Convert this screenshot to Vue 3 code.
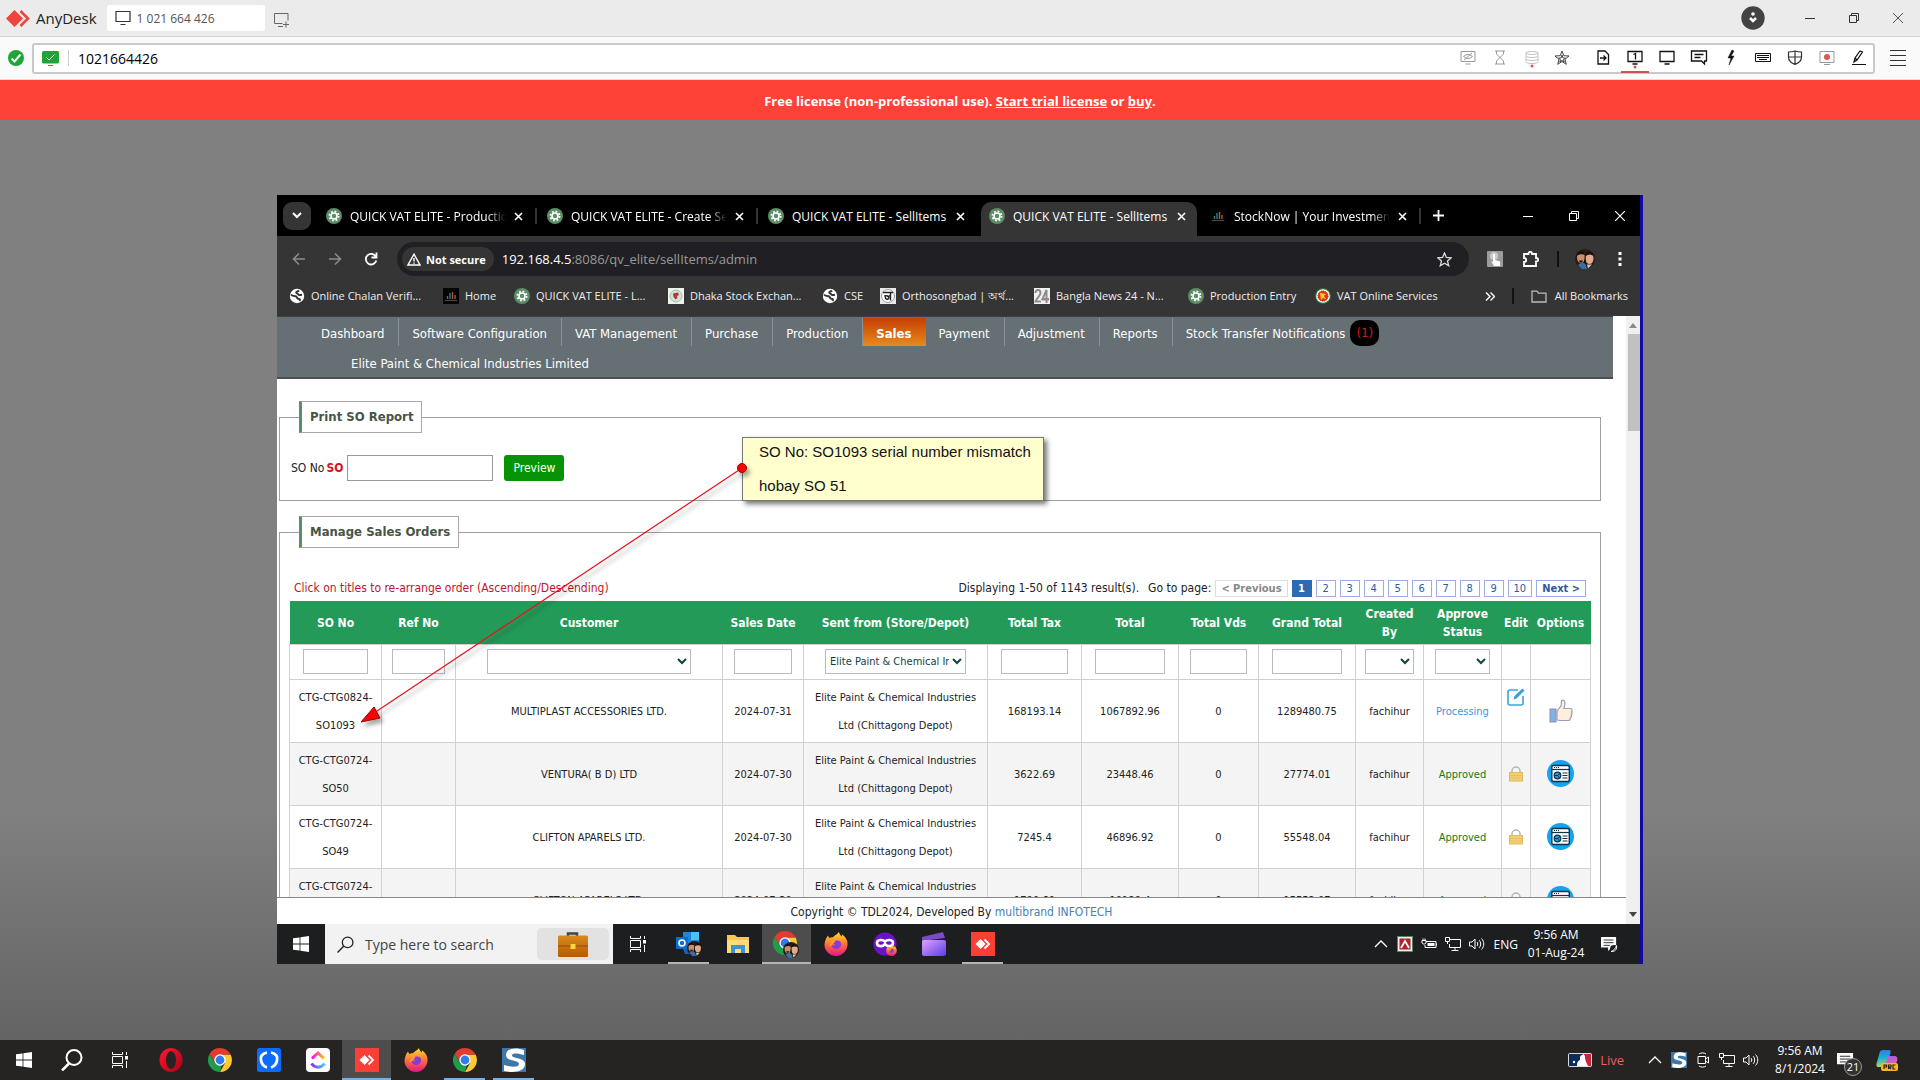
<template>
  <div class="desktop">
    <!-- Shared icon shapes -->
    <svg class="sprite" aria-hidden="true">
      <defs>
        <linearGradient id="gFox" x1="0" y1="0" x2="0" y2="1">
          <stop offset="0" stop-color="#ffe226" /><stop offset=".5" stop-color="#ff7139" /><stop offset="1" stop-color="#e31587" />
        </linearGradient>
        <linearGradient id="gOpera" x1="0" y1="0" x2="1" y2="1">
          <stop offset="0" stop-color="#ff1b2d" /><stop offset="1" stop-color="#a70014" />
        </linearGradient>
        <linearGradient id="gClip" x1="0" y1="0" x2="1" y2="1">
          <stop offset="0" stop-color="#e0a3fa" /><stop offset="1" stop-color="#5a3be8" />
        </linearGradient>
        <linearGradient id="gCase" x1="0" y1="0" x2="0" y2="1">
          <stop offset="0" stop-color="#d98a1a" /><stop offset="1" stop-color="#b35c06" />
        </linearGradient>
        <linearGradient id="gUp" x1="0" y1="0" x2="1" y2="0">
          <stop offset="0" stop-color="#ff02f0" /><stop offset="1" stop-color="#ffc800" />
        </linearGradient>
        <linearGradient id="gDown" x1="0" y1="0" x2="1" y2="0">
          <stop offset="0" stop-color="#8930fd" /><stop offset="1" stop-color="#49ccf9" />
        </linearGradient>
        <linearGradient id="gCopA" x1="0" y1="0" x2="0" y2="1">
          <stop offset="0" stop-color="#2a7cf0" /><stop offset=".5" stop-color="#1fb6c9" /><stop offset="1" stop-color="#b6d84a" />
        </linearGradient>
        <linearGradient id="gCopB" x1="0" y1="0" x2="0" y2="1">
          <stop offset="0" stop-color="#a65cf0" /><stop offset="1" stop-color="#f0609a" />
        </linearGradient>
      </defs>
      <symbol id="gear" viewBox="0 0 16 16">
        <circle cx="8" cy="8" r="8" fill="#5c8d66" />
        <circle cx="8" cy="8" r="4.6" fill="none" stroke="#fff" stroke-width="1.8" stroke-dasharray="1.8 1.81" />
        <circle cx="8" cy="8" r="3" fill="none" stroke="#fff" stroke-width="1.6" />
      </symbol>
      <symbol id="globe" viewBox="0 0 16 16">
        <circle cx="8" cy="8" r="7.2" fill="#fff" />
        <path d="M2 6.500c1.500 2 3.500 1 5 1.800s.5 2.200 2.500 2.500 1.500 1.200 1 2.200M10 2.500c-1 1.200-2.500.6-2.800 1.800-.2 1 1.600.9 2 2 .4 1 2 .8 3.800.4" fill="none" stroke="#353535" stroke-width="2" />
      </symbol>
      <symbol id="stock" viewBox="0 0 16 16">
        <rect width="16" height="16" fill="#050505" />
        <path d="M4.500 11V8M7 11V5" stroke="#2f7f8a" stroke-width="1.400" />
        <path d="M9.500 11V4M12 11V7" stroke="#b5543c" stroke-width="1.400" />
        <path d="M2 12.500h12" stroke="#5c4640" />
      </symbol>
      <symbol id="seal" viewBox="0 0 16 16">
        <rect width="16" height="16" fill="#eef3ee" /><circle cx="8" cy="8" r="6" fill="#d3e2d6" stroke="#a5bcae" />
        <path d="M5 5.500l5-1 1 2.500-2 1 .5 2-2 1.500-2-2.500z" fill="#b03a3a" />
      </symbol>
      <symbol id="ortho" viewBox="0 0 16 16">
        <rect width="16" height="16" fill="#e9e9e9" /><circle cx="8" cy="8" r="6.500" fill="#fff" stroke="#999" />
        <path d="M3 4.500h10M10.500 4.500v8M5 7c0 3 1 5 3 4s0-4-3-3M8 9l2.500-2" fill="none" stroke="#222" stroke-width="1.400" />
      </symbol>
      <symbol id="news" viewBox="0 0 16 16">
        <rect width="16" height="16" fill="#f2f2f2" />
        <path d="M1.500 5c0-4 5-4 5 0 0 3-4 5-5 8.500h5.500M12.500 15V2L8.500 11H15" fill="none" stroke="#8d8d8d" stroke-width="2" />
        <path d="M8 12h7" stroke="#c77" />
      </symbol>
      <symbol id="vat" viewBox="0 0 16 16">
        <circle cx="8" cy="8" r="7.800" fill="#2f8a3e" /><circle cx="8" cy="8" r="6.800" fill="#fff" />
        <circle cx="8" cy="8" r="5.200" fill="#e0331b" stroke="#c22" stroke-dasharray="1 1" />
        <path d="M5 5l6 1-2 2 2 3-3-1-2 2z" fill="#ffc62b" />
      </symbol>
      <symbol id="chrome" viewBox="0 0 24 24">
        <path d="M12 6.500h10.600A12 12 0 0 1 12 24l5-9z" fill="#fcc934" />
        <path d="M1.600 6A12 12 0 0 1 22.600 6.500H12L7 14.500z" fill="#e33b2e" />
        <path d="M1.600 6l5.600 9.500 7 .5L12 24A12 12 0 0 1 1.600 6z" fill="#1e9e4a" />
        <circle cx="12" cy="12" r="5.700" fill="#fff" /><circle cx="12" cy="12" r="4.400" fill="#2f7cf0" />
      </symbol>
      <symbol id="firefox" viewBox="0 0 24 24">
        <path d="M4 3.500c.3 1.200.8 2 1.500 2.500C7 5 8 5 9 5.300 10 3.500 13 3 15 0c.5 2 1 3 3 4.500.2-.8 0-1.500-.3-2.300C22 5 24 9 23.500 13 23 19 18 24 12 24S.5 19 .5 13C.5 10 2 5.500 4 3.500z" fill="url(#gFox)" />
        <path d="M9 9c2 .5 4-1.500 6.500 0 2.500 1.600 2 6-1 7.500s-7 0-7-3.500c1 .8 2.500.5 3.500-.5-1.500-.5-2-2-2-3.500z" fill="#8a3bd6" />
        <path d="M4 6c1 3 4 2 6 3.500-1 1.500-3 1.500-4 4.500" fill="none" stroke="#ff9a2e" stroke-width="2" />
      </symbol>
      <symbol id="anydesk" viewBox="0 0 24 24">
        <rect width="24" height="24" fill="#fb3e36" />
        <path d="M9.500 7l5 5-5 5-5-5z" fill="#fff" /><path d="M13.500 7.500L18 12l-4.500 4.500" fill="none" stroke="#fff" stroke-width="1.800" />
      </symbol>
      <symbol id="windows" viewBox="0 0 16 16">
        <path d="M0 2.300L6.600 1.400v6.200H0zM7.400 1.300L16 0v7.600H7.400zM0 8.400h6.600v6.200L0 13.700zM7.400 8.400H16V16l-8.600-1.300z" fill="#fff" />
      </symbol>
      <symbol id="taskview" viewBox="0 0 16 16">
        <path d="M.5 0v2.500h10V0M.5 16v-2.500h10V16M.5 4.500h10v7H.5z" fill="none" stroke="#fff" />
        <path d="M14.500 0v3M14.500 9v7" stroke="#fff" /><rect x="13" y="4" width="3" height="3.500" fill="#fff" />
      </symbol>
      <symbol id="lens" viewBox="0 0 16 16">
        <circle cx="10" cy="6" r="5" fill="none" stroke="currentColor" stroke-width="1.200" /><path d="M6.500 9.500L.5 15.500" stroke="currentColor" stroke-width="1.300" />
      </symbol>
      <symbol id="chevup" viewBox="0 0 16 16"><path d="M2 11l6-6 6 6" fill="none" stroke="#fff" stroke-width="1.300" /></symbol>
      <symbol id="network" viewBox="0 0 16 16">
        <path d="M5 3.500h10.500v8H4.500V8M10 11.500v3M6.500 14.500h7M.5 1.500h4v4h-4zM2.500 5.500v2.500" fill="none" stroke="#fff" />
      </symbol>
      <symbol id="speaker" viewBox="0 0 16 16">
        <path d="M.5 6v4h2.500l3 3V3L3 6zM8 6c1 1 1 3 0 4M10.200 4.200c2 2 2 5.600 0 7.600M12.500 2.500c3 3 3 8 0 11" fill="none" stroke="#fff" />
      </symbol>
      <symbol id="note" viewBox="0 0 18 18">
        <path d="M0 1h17v12h-5l-4 4v-4H0z" fill="#fff" /><path d="M3 4.500h11M3 7.500h11M3 10.500h7" stroke="#222" />
      </symbol>
      <symbol id="sicon" viewBox="0 0 24 24">
        <rect width="24" height="24" fill="#3f78a8" />
        <path d="M22 2c-8-3-18-2-18 5 0 7 13 4 13 9 0 4-9 3-15 1v6c9 2 21 1 21-7C23 9 10 11 10 7.500c0-3 7-2 12-.5z" fill="#fff" />
      </symbol>
      <symbol id="faces" viewBox="0 0 20 20">
        <circle cx="10" cy="10" r="10" fill="#2a1a12" />
        <ellipse cx="6" cy="8.500" rx="4" ry="5.500" fill="#c98e6c" /><ellipse cx="14.500" cy="9.500" rx="4" ry="5.500" fill="#e0ab8c" />
        <path d="M1.500 7C2 1 9 1 10 6 7 4.500 4 5 1.500 7zM10.500 7c1-6 7-5 8.500 0-3-2-5.500-2-8.500 0z" fill="#17100d" />
        <path d="M4 11.500h4l-1 2H5zM10 5l1 10-2-1z" fill="#17100d" />
        <path d="M3 16c3-3 6-3 8 0l1 4H7z" fill="#3a6ea5" /><path d="M12 15.500h5l-4 4z" fill="#cfc6c0" />
      </symbol>
      <symbol id="lock" viewBox="0 0 14 16">
        <path d="M3 7V5a4 4 0 0 1 8 0v2" fill="none" stroke="#b5b5b5" stroke-width="1.500" />
        <rect x=".5" y="6.500" width="13" height="8.500" fill="#f3cf74" stroke="#e0b95c" /><path d="M1 9.500h12M1 12h12" stroke="#e8bf5e" />
      </symbol>
      <symbol id="report" viewBox="0 0 27 27">
        <circle cx="13.500" cy="13.500" r="13.500" fill="#14a3ee" />
        <rect x="4.800" y="5.500" width="17.500" height="16" rx="1.500" fill="#fff" stroke="#123047" stroke-width="1.400" />
        <path d="M5 9.500h17" stroke="#123047" stroke-width="1.200" /><path d="M7 7.500h5" stroke="#123047" stroke-dasharray="1 1" />
        <circle cx="10.500" cy="15.500" r="3.300" fill="#14a3ee" stroke="#123047" stroke-width="1.200" /><path d="M10.500 15.500l3-2M10.500 15.500l2 2.500M10.500 15.500h-3" stroke="#123047" />
        <path d="M15.500 13h5M15.500 15.500h5M15.500 18h5" stroke="#123047" />
      </symbol>
      <symbol id="monitor" viewBox="0 0 16 16"><path d="M1 1.500h14v10H1zM5.500 14.500h5" fill="none" stroke="currentColor" stroke-width="1.200" /></symbol>
    </svg>

    <!-- AnyDesk title bar -->
    <header class="ad-title">
      <svg width="24" height="17" viewBox="0 0 24 17"><path d="M8.500 0L17 8.500 8.500 17 0 8.500z" fill="#ef443b" /><path d="M14.500 1l7.500 7.500-7.500 7.500" fill="none" stroke="#ef443b" stroke-width="2.600" /></svg>
      <span class="ad-brand">AnyDesk</span>
      <button class="ad-tab"><svg width="16" height="16"><use href="#monitor" /></svg>1 021 664 426</button>
      <button class="bare ad-new" aria-label="New tab">
        <svg width="17" height="16" viewBox="0 0 17 16"><path d="M9.500 11.500H1.500v-10h13.500v7M5 14.500h5M13 9.500v6M10 12.500h6" fill="none" stroke="#666" /></svg>
      </button>
      <div class="ad-controls">
        <button class="bare ad-dot" aria-label="Status"><svg width="24" height="24" viewBox="0 0 24 24"><circle cx="12" cy="12" r="11.700" fill="#434343" /><circle cx="12" cy="8" r="1.800" fill="#fff" /><path d="M9 12l3 3 3-3" fill="none" stroke="#fff" stroke-width="2.500" /></svg></button>
        <button class="bare" aria-label="Minimize"><svg width="12" height="12"><path d="M1 6.500h10" stroke="#333" /></svg></button>
        <button class="bare" aria-label="Restore"><svg width="12" height="12" viewBox="0 0 12 12"><path d="M1.500 3.500h7v7h-7zM3.500 3.500v-2h7v7h-2" fill="none" stroke="#333" /></svg></button>
        <button class="bare" aria-label="Close"><svg width="12" height="12"><path d="M1 1l10 10M11 1L1 11" stroke="#555" /></svg></button>
      </div>
    </header>

    <!-- AnyDesk address row -->
    <div class="ad-bar">
      <svg width="16" height="16" viewBox="0 0 16 16"><circle cx="8" cy="8" r="8" fill="#1fa535" /><path d="M3.500 8.500l3 3 6-7" fill="none" stroke="#fff" stroke-width="2" /></svg>
      <div class="ad-address">
        <svg width="17" height="15" viewBox="0 0 17 15"><rect width="17" height="12.500" rx="1.500" fill="#1fa535" /><path d="M4.500 6.500l2.500 2.500 5.500-5.500" fill="none" stroke="#fff" /><path d="M6 14.500h5" stroke="#1fa535" /></svg>
        <i class="ad-line"></i>
        <input class="ad-input" aria-label="Remote address" value="1021664426" />
        <button v-for="t in tools" :key="t.name" class="bare ad-tool" :class="t.cls" :aria-label="t.name">
          <svg width="16" height="16" viewBox="0 0 16 16" overflow="visible">
            <path :d="t.d" :fill="t.fill || 'none'" stroke="currentColor" :stroke-width="t.w || 1" />
            <circle v-if="t.dot" cx="8" :cy="t.dot" :r="t.r || 1.5" fill="#e05550" />
          </svg>
        </button>
      </div>
      <button class="bare ad-menu" aria-label="Menu"><svg width="16" height="18"><path d="M0 1.500h16M0 6.500h16M0 11.500h16M0 16.500h16" stroke="#333" /></svg></button>
    </div>

    <div class="ad-banner">Free license (non-professional use). <a href="#">Start trial license</a> or <a href="#">buy</a>.</div>

    <main class="stage">
      <div class="remote">
        <!-- Chrome tab strip -->
        <div class="tabs">
          <button class="tab-search" aria-label="Search tabs"><svg width="10" height="7"><path d="M1 1l4 4 4-4" fill="none" stroke="#fff" stroke-width="2" /></svg></button>
          <div v-for="(tab, i) in tabs" :key="i" class="tab" :class="{ active: tab.active, line: tab.line }">
            <svg width="16" height="16"><use :href="'#' + tab.icon" /></svg>
            <span class="tab-text" :class="{ fade: tab.fade }">{{ tab.title }}</span>
            <button class="bare" aria-label="Close tab"><svg width="9" height="9"><path d="M1 1l7 7M8 1L1 8" stroke="#fff" stroke-width="1.600" /></svg></button>
          </div>
          <button class="bare tab-plus" aria-label="New tab"><svg width="11" height="11"><path d="M5.500 0v11M0 5.500h11" stroke="#fff" stroke-width="1.800" /></svg></button>
          <div class="win-controls">
            <button class="bare" aria-label="Minimize"><svg width="10" height="10"><path d="M0 5.500h10" stroke="#fff" /></svg></button>
            <button class="bare" aria-label="Restore"><svg width="10" height="10"><path d="M.5 2.500h7v7h-7zM2.500 2.500v-2h7v7h-2" fill="none" stroke="#fff" /></svg></button>
            <button class="bare" aria-label="Close"><svg width="10" height="10"><path d="M0 0l10 10M10 0L0 10" stroke="#fff" stroke-width="1.200" /></svg></button>
          </div>
        </div>

        <!-- Chrome toolbar -->
        <div class="toolbar">
          <button class="bare" aria-label="Back"><svg width="14" height="14"><path d="M13 7H2M7 1.500L1.500 7 7 12.500" fill="none" stroke="#8a8a8a" stroke-width="1.600" /></svg></button>
          <button class="bare" aria-label="Forward"><svg width="14" height="14"><path d="M1 7h11M7 1.500L12.500 7 7 12.500" fill="none" stroke="#8a8a8a" stroke-width="1.600" /></svg></button>
          <button class="bare" aria-label="Reload"><svg width="14" height="14"><path d="M12 5A5.300 5.300 0 1 0 12.300 8.500M12.500 .5v5h-5" fill="none" stroke="#fff" stroke-width="1.800" /></svg></button>
          <div class="omnibox">
            <span class="chip"><svg width="14" height="13" viewBox="0 0 14 13"><path d="M7 1.200L13 12H1zM7 5v3.500M7 9.500v1.300" fill="none" stroke="#fff" stroke-width="1.400" /></svg>Not secure</span>
            <span class="url"><b>192.168.4.5</b>:8086/qv_elite/sellItems/admin</span>
            <svg width="15" height="15" viewBox="0 0 15 15"><path d="M7.500 1l1.900 4.500 4.800.4-3.700 3.100 1.200 4.700-4.200-2.500-4.200 2.500 1.200-4.700L.8 5.900l4.800-.4z" fill="none" stroke="#ddd" stroke-width="1.300" /></svg>
          </div>
          <svg width="16" height="16" viewBox="0 0 16 16"><rect width="16" height="16" rx="1" fill="#9c9c9c" /><circle cx="7" cy="5" r="4" fill="#c9c9c9" /><path d="M6 3h2v6l5 1.500V15H7l-3-5 2 1z" fill="#fff" /></svg>
          <svg class="puzzle" width="16" height="16" viewBox="0 0 16 16"><path d="M1 3h4.500c0-3 3.500-3 3.500 0H13v4c3 0 3 3.500 0 3.500V15H1v-4c3 0 3-4 0-4z" fill="none" stroke="#fff" stroke-width="1.800" /></svg>
          <i class="vline"></i>
          <svg class="avatar" width="20" height="20"><use href="#faces" /></svg>
          <button class="bare dots" aria-label="Chrome menu"><svg width="4" height="16"><path d="M2 1v3M2 6.500v3M2 12v3" stroke="#fff" stroke-width="3" /></svg></button>
        </div>

        <nav class="bookmarks">
          <a v-for="b in bookmarks" :key="b.label" href="#"><svg width="16" height="16"><use :href="'#' + b.icon" /></svg>{{ b.label }}</a>
          <div class="bm-end">
            <svg width="10" height="9"><path d="M1 .5l4 4-4 4M5.500 .5l4 4-4 4" fill="none" stroke="#fff" stroke-width="1.400" /></svg>
            <i class="vline"></i>
            <a href="#"><svg width="16" height="13" viewBox="0 0 16 13"><path d="M1 1.200h5l1.500 2H15V12H1z" fill="none" stroke="#bbb" stroke-width="1.300" /></svg>All Bookmarks</a>
          </div>
        </nav>

        <!-- Web page -->
        <div class="viewport">
          <div class="page">
            <div class="scroll">
              <nav class="menu">
                <div class="menu-row">
                  <a v-for="m in menu" :key="m" href="#" :class="{ current: m === 'Sales' }">{{ m }}<span v-if="m.startsWith('Stock')" class="count">(1)</span></a>
                </div>
                <div class="company">Elite Paint &amp; Chemical Industries Limited</div>
              </nav>

              <fieldset class="box">
                <legend>Print SO Report</legend>
                <form class="so-form" @submit.prevent>
                  <label for="so">SO No</label><b>SO</b>
                  <input id="so" type="text" />
                  <button>Preview</button>
                </form>
              </fieldset>

              <fieldset class="box orders">
                <legend>Manage Sales Orders</legend>
                <div class="summary">
                  <span class="hint">Click on titles to re-arrange order (Ascending/Descending)</span>
                  <span class="shown">Displaying 1-50 of 1143 result(s).</span>
                  <span class="goto">Go to page:</span>
                  <div class="pager">
                    <a href="#" class="prev">&lt; Previous</a>
                    <a v-for="n in 10" :key="n" href="#" :class="{ on: n === 1 }">{{ n }}</a>
                    <a href="#" class="next">Next &gt;</a>
                  </div>
                </div>
                <table>
                  <colgroup>
                    <col v-for="c in columns" :key="c.title" :style="{ width: c.width ? c.width + 'px' : 'auto' }" />
                  </colgroup>
                  <thead>
                    <tr><th v-for="c in columns" :key="c.title" :class="{ narrow: c.filter === 'select' }">{{ c.title }}</th></tr>
                    <tr class="filters">
                      <td v-for="c in columns" :key="c.title">
                        <input v-if="c.filter === 'text'" type="text" :aria-label="c.title" />
                        <select v-else-if="c.filter" :aria-label="c.title" :class="{ wide: c.filter === 'wide' }"><option>{{ c.option }}</option></select>
                      </td>
                    </tr>
                  </thead>
                  <tbody>
                    <tr v-for="r in rows" :key="r.so">
                      <td>CTG-{{ r.prefix }}-<br />{{ r.so }}</td>
                      <td></td>
                      <td>{{ r.customer }}</td>
                      <td>{{ r.date }}</td>
                      <td>Elite Paint &amp; Chemical Industries<br />Ltd (Chittagong Depot)</td>
                      <td>{{ r.tax }}</td>
                      <td>{{ r.total }}</td>
                      <td>0</td>
                      <td>{{ r.grand }}</td>
                      <td>fachihur</td>
                      <td :class="r.status.toLowerCase()">{{ r.status }}</td>
                      <td class="icon" :class="{ edit: r.status === 'Processing' }">
                        <svg v-if="r.status === 'Processing'" width="18" height="18" viewBox="0 0 18 18"><path d="M11 2H3Q1 2 1 4v11q0 2 2 2h11q2 0 2-2V8" fill="none" stroke="#3aa6dd" stroke-width="1.600" /><path d="M6.500 11.500l1-3.500L15.500.5l2 2-8 8z" fill="#3a9fd6" /></svg>
                        <svg v-else width="14" height="16"><use href="#lock" /></svg>
                      </td>
                      <td class="icon">
                        <svg v-if="r.status === 'Processing'" width="24" height="24" viewBox="0 0 24 24"><rect x="1" y="10" width="6" height="13" fill="#7eb2ea" stroke="#8b8fb5" /><path d="M8 21V12l4-5 .5-5.500c2-1 3.500.5 3.500 3L15 9.500h6.500c2 0 2 2.500 1 3.500 1 1 .8 2.500-.3 3 .6 1.500 0 2.500-1 3 .2 1.500-.5 2.500-2 2.500h-8z" fill="#fdeedd" stroke="#a79ab8" stroke-width="1.200" /></svg>
                        <svg v-else width="27" height="27"><use href="#report" /></svg>
                      </td>
                    </tr>
                  </tbody>
                </table>
              </fieldset>
            </div>
            <footer>Copyright © TDL2024, Developed By <a href="#">multibrand INFOTECH</a></footer>
          </div>
          <div class="scrollbar">
            <svg width="8" height="5"><path d="M0 5l4-5 4 5z" fill="#8a8a8a" /></svg>
            <i class="thumb"></i>
            <svg width="8" height="5"><path d="M0 0l4 5 4-5z" fill="#444" /></svg>
          </div>

          <!-- Annotation drawn over the page -->
          <div class="callout"><p>SO No: SO1093 serial number mismatch</p><p>hobay SO 51</p></div>
          <svg class="arrow" width="400" height="270" viewBox="0 0 400 270">
            <g class="arrow-shape">
              <path d="M386 6L18 251" stroke="#e8101c" stroke-width="1.200" />
              <path d="M5 260l13-15 6 11z" fill="#f00" stroke="#900" />
              <circle cx="386" cy="6" r="4.500" fill="#f00" stroke="#900" />
            </g>
          </svg>
        </div>

        <!-- Remote taskbar -->
        <div class="taskbar inner">
          <button class="task start" aria-label="Start"><svg width="16" height="16"><use href="#windows" /></svg></button>
          <label class="search">
            <svg width="17" height="17"><use href="#lens" /></svg>
            <input type="text" placeholder="Type here to search" aria-label="Search" />
            <span class="case"><svg width="30" height="25" viewBox="0 0 30 25"><path d="M10 4V1.500h9V4" fill="none" stroke="#444" stroke-width="2.500" /><rect y="3.500" width="30" height="21.500" rx="1.500" fill="url(#gCase)" /><path d="M0 14h30" stroke="#8f4b04" /><rect x="12.500" y="12" width="5" height="5" fill="#ffd43a" /></svg></span>
          </label>
          <button class="task" aria-label="Task view"><svg width="16" height="16"><use href="#taskview" /></svg></button>
          <button class="task run first" aria-label="Outlook"><svg width="26" height="26" viewBox="0 0 26 26"><rect x="7" y="1" width="16" height="16" fill="#1d86d8" /><rect x="15" y="1" width="8" height="8" fill="#4cc1f5" /><path d="M5 12h18v11H9z" fill="#1663b8" /><rect x="0" y="6" width="12" height="12" fill="#0f6cc9" /><circle cx="6" cy="12" r="3" fill="none" stroke="#fff" stroke-width="1.600" /><svg x="11" y="10" width="15" height="15"><use href="#faces" /></svg></svg></button>
          <button class="task" aria-label="Explorer"><svg width="22" height="20" viewBox="0 0 22 20"><path d="M0 1h8l2 2h12v16H0z" fill="#f8c94b" /><path d="M0 6h22v13H0z" fill="#ffdc75" /><path d="M4 19v-8h14v8h-4v-4H8v4z" fill="#3b93d9" /></svg></button>
          <button class="task active run" aria-label="Chrome"><svg width="27" height="27" viewBox="0 0 27 27"><svg width="24" height="24"><use href="#chrome" /></svg><svg x="10" y="11" width="16" height="16"><use href="#faces" /></svg></svg></button>
          <button class="task" aria-label="Firefox"><svg width="24" height="24"><use href="#firefox" /></svg></button>
          <button class="task" aria-label="Firefox private"><svg width="24" height="24" viewBox="0 0 24 24"><circle cx="12" cy="12" r="11.500" fill="#6d12c9" /><path d="M12 9.500c-2-2-8-2.500-8 1.500s6 4 8 1c2 3 8 3 8-1s-6-3.500-8-1.500z" fill="none" stroke="#fff" stroke-width="2.600" /><svg x="13" y="13" width="11" height="11"><use href="#firefox" /></svg></svg></button>
          <button class="task" aria-label="Clipchamp"><svg width="24" height="24" viewBox="0 0 24 24"><path d="M0 5L21 0l2 6L0 9z" fill="#7a4bc2" /><rect y="8" width="24" height="16" rx="2" fill="url(#gClip)" /></svg></button>
          <button class="task run" aria-label="AnyDesk"><svg width="24" height="24"><use href="#anydesk" /></svg></button>
          <div class="tray">
            <svg width="16" height="16"><use href="#chevup" /></svg>
            <svg width="16" height="16" viewBox="0 0 16 16"><rect width="16" height="16" fill="#4d8a63" /><rect x="1" y="1" width="14" height="14" fill="#eee" /><rect x="2.500" y="2.500" width="11" height="11" fill="#b3202b" /><path d="M4 12l4-7 4 7" fill="none" stroke="#fff" stroke-width="1.800" /></svg>
            <svg width="16" height="16" viewBox="0 0 16 16"><path d="M5 5.500h10v6H4V9M1 4.500h4v2.500l-1.500 1H2.500L1 7zM2 2.500v2M4 2.500v2M15.500 7.500v2" fill="none" stroke="#fff" /><path d="M6.500 8.500h7" stroke="#fff" stroke-width="3" /></svg>
            <svg width="16" height="16"><use href="#network" /></svg>
            <svg width="16" height="16"><use href="#speaker" /></svg>
            <span class="lang">ENG</span>
            <div class="clock"><span>9:56 AM</span><span>01-Aug-24</span></div>
            <svg class="bell" width="17" height="17" viewBox="0 0 17 17"><svg width="16" height="16"><use href="#note" /></svg><circle cx="13" cy="13" r="4" fill="#1d1e1f" /><path d="M15.500 9.500c1 4-2 6.500-5.500 6 3-1 4.500-3 5.500-6z" fill="none" stroke="#fff" /></svg>
          </div>
        </div>
      </div>
    </main>

    <!-- Local taskbar -->
    <div class="taskbar outer">
      <button class="task start" aria-label="Start"><svg width="16" height="16"><use href="#windows" /></svg></button>
      <button class="task start" aria-label="Search"><svg width="22" height="22" viewBox="0 0 22 22"><circle cx="13" cy="8.500" r="7.500" fill="none" stroke="#fff" stroke-width="2" /><path d="M8 14.500L1 21.500" stroke="#fff" stroke-width="2.500" /></svg></button>
      <button class="task start" aria-label="Task view"><svg width="16" height="16"><use href="#taskview" /></svg></button>
      <button class="task first" aria-label="Opera"><svg width="24" height="24" viewBox="0 0 24 24"><ellipse cx="12" cy="12" rx="11.500" ry="12" fill="url(#gOpera)" /><ellipse cx="12" cy="12" rx="5" ry="9" fill="#252423" /></svg></button>
      <button class="task" aria-label="Chrome"><svg width="24" height="24"><use href="#chrome" /></svg></button>
      <button class="task" aria-label="Brackets"><svg width="24" height="24" viewBox="0 0 24 24"><rect width="24" height="24" rx="2.500" fill="#0b6cff" /><path d="M10 4.500c-5 1-7 4-6 8 .7 3.500 3 6 6 7M14 4.500c5 1 7 4 6 8-.7 3.500-3 6-6 7" fill="none" stroke="#fff" stroke-width="2.800" /></svg></button>
      <button class="task" aria-label="ClickUp"><svg width="24" height="24" viewBox="0 0 24 24"><rect width="24" height="24" rx="4" fill="#fff" /><path d="M6 10.500l6-5.500 6 5.500" fill="none" stroke="url(#gUp)" stroke-width="3" /><path d="M5.500 15.500c3.500 5 9.500 5 13 0" fill="none" stroke="url(#gDown)" stroke-width="3" /></svg></button>
      <button class="task active run" aria-label="AnyDesk"><svg width="24" height="24"><use href="#anydesk" /></svg></button>
      <button class="task" aria-label="Firefox"><svg width="24" height="24"><use href="#firefox" /></svg></button>
      <button class="task run" aria-label="Chrome window"><svg width="24" height="24"><use href="#chrome" /></svg></button>
      <button class="task run" aria-label="Snagit"><svg width="24" height="24"><use href="#sicon" /></svg></button>
      <div class="tray">
        <svg width="24" height="14" viewBox="0 0 24 14"><rect width="24" height="14" rx="2" fill="#ddd" /><path d="M1 1h14l-3 12H1z" fill="#0c2c5c" /><path d="M16 1h7v12h-4z" fill="#c4243c" /><path d="M9 13c0-4 1-5 3-6V4c1-3 5-3 5 0v3l3 6z" fill="#fff" /><circle cx="6" cy="9" r="1.200" fill="#fff" /></svg>
        <span class="live">Live</span>
        <svg width="16" height="16"><use href="#chevup" /></svg>
        <svg width="16" height="16"><use href="#sicon" /></svg>
        <svg width="16" height="16" viewBox="0 0 16 16"><path d="M3 4.500h7.500v7H3zM10.500 7l3-2v6l-3-2M4 2c2-1.500 5-1.500 7 0M4 14c2 1.500 5 1.500 7 0" fill="none" stroke="#fff" /></svg>
        <svg width="16" height="16"><use href="#network" /></svg>
        <svg width="16" height="16"><use href="#speaker" /></svg>
        <div class="clock"><span>9:56 AM</span><span>8/1/2024</span></div>
        <div class="bell"><svg width="17" height="17"><use href="#note" /></svg><span class="badge">21</span></div>
        <svg class="copilot" width="22" height="22" viewBox="0 0 22 22"><path d="M7 1h6c2 0 2 2 1.500 3L11 14c-1 3-3 4-5 4H3c-3 0-3-2-2-5L3.500 4C4 2 5 1 7 1z" fill="url(#gCopA)" /><path d="M13 7h5c3 0 4 2 3 5l-1.500 4H9l2-6c.5-2 1-3 2-3z" fill="url(#gCopB)" /><rect x="5" y="14" width="17" height="8" rx="2" fill="#ffb81c" /><path d="M8 20v-4h2.500v2H8M12.500 20v-4H15v2h-2l2 2M19.500 16h-2.500v4h2.500" fill="none" stroke="#222" stroke-width="1.200" /></svg>
      </div>
    </div>
  </div>
</template>

<script setup>
// Iconos de la barra de AnyDesk
const tools = [
  { name: 'Privacy', cls: 'dim', d: 'M1 1.500h14v10H1zM5.500 14h5M3.500 6.500q4.500-4 9 0q-4.500 4-9 0M4 10l8-7' },
  { name: 'Timer', cls: 'dim', d: 'M3 1h10M3 14h10M4.500 1v3L8 7.500 4.500 11v3M11.500 1v3L8 7.500l3.500 3.500v3' },
  { name: 'Storage', cls: 'faint', d: 'M2 3c0-2 12-2 12 0v9c0 2-12 2-12 0zM2 3c0 2 12 2 12 0M2 6c0 2 12 2 12 0M2 9c0 2 12 2 12 0', dot: 16 },
  { name: 'Favorites', cls: 'star', d: 'M8 1l1.800 4.700 5.200.3-4 3.300 1.300 5L8 11.500l-4.300 2.800 1.300-5L1 6l5.200-.3zM8 5l1 3 2.500.2-2 1.400.7 2.400L8 10.500 5.800 12l.7-2.400-2-1.400L7 8z' },
  { name: 'File transfer', d: 'M3 1h7l3.500 3.500V14H3zM5 8h6M8.500 5.500L11 8l-2.500 2.500', w: 1.3 },
  { name: 'Monitor one', cls: 'picked', d: 'M1 1.500h14v10H1zM5.500 14h5M6.500 4.500L8.500 3.500v6', w: 1.3, dot: 17 },
  { name: 'Display', d: 'M1 1.500h14v10H1zM5.500 14h5', w: 1.3 },
  { name: 'Chat', d: 'M.5 1h15v10h-2v3l-3-3H.5zM3.500 4.500h9M3.500 7.500h6', w: 1.3 },
  { name: 'Actions', d: 'M9 0L5 8h3l-2 7 5-9H8l3-5z', fill: '#111', w: 0.5 },
  { name: 'Keyboard', d: 'M.5 3.500h15v8H.5zM2 5.500h12M2 7.500h12M4 9.500h8' },
  { name: 'Permissions', cls: 'soft', d: 'M1.500 2q3.500 0 6.500-1 3 1 6.500 1v5q0 5-6.500 7.500-6.500-2.500-6.500-7.500zM8 1v13M1.500 7h13', w: 1.2 },
  { name: 'Record', cls: 'dim', d: 'M1 1.500h14v11H1zM5 14.500h6', dot: 7, r: 3 },
  { name: 'Whiteboard', d: 'M1 14.500h14M3 12l1-4L9 1l2.500 1L6 10zM4 8l2 2', w: 1.2 },
]

// Pestañas del navegador
const tabs = [
  { title: 'QUICK VAT ELITE - Production', icon: 'gear', fade: true, line: true },
  { title: 'QUICK VAT ELITE - Create Sell', icon: 'gear', fade: true, line: true },
  { title: 'QUICK VAT ELITE - SellItems', icon: 'gear' },
  { title: 'QUICK VAT ELITE - SellItems', icon: 'gear', active: true },
  { title: 'StockNow | Your Investment', icon: 'stock', fade: true, line: true },
]

const bookmarks = [
  { label: 'Online Chalan Verifi...', icon: 'globe' },
  { label: 'Home', icon: 'stock' },
  { label: 'QUICK VAT ELITE - L...', icon: 'gear' },
  { label: 'Dhaka Stock Exchan...', icon: 'seal' },
  { label: 'CSE', icon: 'globe' },
  { label: 'Orthosongbad | অর্থ...', icon: 'ortho' },
  { label: 'Bangla News 24 - N...', icon: 'news' },
  { label: 'Production Entry', icon: 'gear' },
  { label: 'VAT Online Services', icon: 'vat' },
]

const menu = ['Dashboard', 'Software Configuration', 'VAT Management', 'Purchase', 'Production', 'Sales', 'Payment', 'Adjustment', 'Reports', 'Stock Transfer Notifications']

// Columnas de la tabla
const columns = [
  { title: 'SO No', width: 92, filter: 'text' },
  { title: 'Ref No', width: 74, filter: 'text' },
  { title: 'Customer', filter: 'wide' },
  { title: 'Sales Date', width: 81, filter: 'text' },
  { title: 'Sent from (Store/Depot)', width: 184, filter: 'wide', option: 'Elite Paint & Chemical Industries Ltd' },
  { title: 'Total Tax', width: 94, filter: 'text' },
  { title: 'Total', width: 97, filter: 'text' },
  { title: 'Total Vds', width: 80, filter: 'text' },
  { title: 'Grand Total', width: 97, filter: 'text' },
  { title: 'Created By', width: 68, filter: 'select' },
  { title: 'Approve Status', width: 78, filter: 'select' },
  { title: 'Edit', width: 29 },
  { title: 'Options', width: 60 },
]

const rows = [
  { prefix: 'CTG0824', so: 'SO1093', customer: 'MULTIPLAST ACCESSORIES LTD.', date: '2024-07-31', tax: '168193.14', total: '1067892.96', grand: '1289480.75', status: 'Processing' },
  { prefix: 'CTG0724', so: 'SO50', customer: 'VENTURA( B D) LTD', date: '2024-07-30', tax: '3622.69', total: '23448.46', grand: '27774.01', status: 'Approved' },
  { prefix: 'CTG0724', so: 'SO49', customer: 'CLIFTON APARELS LTD.', date: '2024-07-30', tax: '7245.4', total: '46896.92', grand: '55548.04', status: 'Approved' },
  { prefix: 'CTG0724', so: 'SO48', customer: 'CLIFTON APARELS LTD.', date: '2024-07-30', tax: '1799.69', total: '10129.4', grand: '15552.07', status: 'Approved' },
]
</script>

<style>
body {
  margin: 0;
}
</style>

<style scoped>
.desktop {
  display: flex;
  flex-direction: column;
  height: 100vh;
  overflow: hidden;
  font-family: "Open Sans", "Noto Sans", sans-serif;
  font-size: 12px;
  color: #222;
}
.desktop * {
  box-sizing: border-box;
}
.sprite {
  position: absolute;
  width: 0;
  height: 0;
}
svg {
  flex: none;
  display: block;
}
button,
input,
select {
  font: inherit;
  margin: 0;
}
.bare {
  display: flex;
  padding: 0;
  border: 0;
  background: none;
  color: inherit;
}

/* AnyDesk */
.ad-title {
  display: flex;
  align-items: center;
  height: 37px;
  padding-left: 6px;
  background: #ebebeb;
  border-bottom: 1px solid #d4d4d4;
}
.ad-brand {
  margin: 0 10px 0 6px;
  font-size: 15px;
  font-weight: 500;
}
.ad-tab {
  display: flex;
  align-items: center;
  gap: 6px;
  width: 158px;
  height: 26px;
  padding: 0 8px;
  border: 0;
  border-radius: 2px;
  background: #fff;
  color: #555;
}
.ad-tab svg {
  color: #333;
}
.ad-new {
  margin: 3px 0 0 8px;
}
.ad-controls {
  display: flex;
  align-items: center;
  gap: 32px;
  margin-left: auto;
  padding-right: 16px;
}
.ad-dot {
  margin-right: 7px;
}
.ad-bar {
  display: flex;
  align-items: center;
  height: 43px;
  padding: 0 14px 0 8px;
  background: #fafafa;
  border-bottom: 1px solid #ddd;
}
.ad-address {
  flex: 1;
  display: flex;
  align-items: center;
  gap: 16px;
  height: 31px;
  margin: 0 15px 0 8px;
  padding: 0 6px 0 8px;
  border: 2px solid #c9c9c9;
  border-radius: 3px;
  background: #fff;
}
.ad-line {
  width: 1px;
  height: 16px;
  margin: 0 -7px;
  background: #ccc;
}
.ad-input {
  flex: 1;
  min-width: 0;
  padding: 0;
  border: 0;
  outline: 0;
  font-size: 14px;
  color: #000;
}
.ad-tool {
  position: relative;
  color: #111;
}
.dim {
  color: #999;
}
.faint {
  color: #c2c2c2;
}
.star {
  margin: 0 9px 0 -2px;
  color: #444;
}
.soft {
  color: #333;
}
.picked::after {
  content: "";
  position: absolute;
  left: -6px;
  right: -6px;
  bottom: -7px;
  height: 2px;
  background: #c8554f;
}
.ad-banner {
  height: 40px;
  background: #fe4238;
  color: #fff;
  font-size: 13px;
  font-weight: 700;
  line-height: 42px;
  text-align: center;
}
.ad-banner a {
  color: #fff;
}

/* Remote screen */
.stage {
  flex: 1;
  display: flex;
  min-height: 0;
  padding: 75px 277px 76px;
  background: linear-gradient(#808080 75%, #646464);
}
.remote {
  flex: 1;
  display: flex;
  flex-direction: column;
  min-width: 0;
  border-right: 3px solid #1408a0;
  background: #353535;
}
.tabs {
  display: flex;
  align-items: center;
  gap: 5px;
  height: 41px;
  padding-left: 6px;
  background: #000;
  color: #fff;
}
.tab-search {
  display: grid;
  place-items: center;
  width: 28px;
  height: 28px;
  margin-right: 2px;
  padding: 0;
  border: 0;
  border-radius: 9px;
  background: #353535;
}
.tab {
  position: relative;
  display: flex;
  align-items: center;
  gap: 8px;
  width: 216px;
  height: 34px;
  margin-top: 7px;
  padding: 0 11px 6px 8px;
}
.tab.active {
  border-radius: 10px 10px 0 0;
  background: #353535;
}
.tab.line::after {
  content: "";
  position: absolute;
  top: 6px;
  right: -3px;
  width: 2px;
  height: 16px;
  background: #333;
}
.tab-text {
  flex: 1;
  overflow: hidden;
  white-space: nowrap;
}
.fade {
  mask-image: linear-gradient(90deg, #000 88%, transparent);
}
.tab-plus {
  margin-left: 10px;
}
.win-controls {
  display: flex;
  gap: 36px;
  margin-left: auto;
  padding-right: 15px;
}
.toolbar {
  display: flex;
  align-items: center;
  height: 46px;
  padding: 0 18px 0 15px;
}
.toolbar > .bare {
  margin-right: 22px;
}
.omnibox {
  flex: 1;
  display: flex;
  align-items: center;
  height: 34px;
  margin: 0 18px 0 -3px;
  padding: 0 17px 0 5px;
  border-radius: 17px;
  background: #202024;
}
.chip {
  display: flex;
  align-items: center;
  gap: 5px;
  height: 24px;
  padding: 0 8px 0 5px;
  border-radius: 12px;
  background: #353535;
  color: #fff;
  font-size: 11px;
  font-weight: 700;
}
.url {
  flex: 1;
  margin-left: 8px;
  color: #999;
  font-size: 13px;
}
.url b {
  color: #fff;
  font-weight: 400;
}
.puzzle {
  margin-left: 20px;
}
.vline {
  width: 2px;
  height: 16px;
  background: #111;
}
.toolbar .vline {
  margin: 0 16px 0 18px;
}
.toolbar .dots {
  margin: 0 0 0 23px;
}
.bookmarks {
  display: grid;
  grid-template-columns: 154px 71px 154px 154px 58px 154px 154px 127px auto 1fr;
  align-items: center;
  height: 34px;
  padding: 0 12px 6px;
}
.bookmarks a {
  display: flex;
  align-items: center;
  gap: 6px;
  color: #eee;
  text-decoration: none;
  white-space: nowrap;
  font-size: 11px;
  line-height: 16px;
}
.bm-end {
  display: flex;
  align-items: center;
  justify-content: flex-end;
  gap: 17px;
}
.bm-end a {
  gap: 8px;
}

/* Page inside the browser */
.viewport {
  position: relative;
  flex: 1;
  display: flex;
  min-height: 0;
  background: #fff;
  font-family: "DejaVu Sans Condensed", "Noto Sans", sans-serif;
  font-size: 12px;
}
.page {
  flex: 1;
  display: flex;
  flex-direction: column;
  min-width: 0;
}
.scroll {
  flex: 1;
  min-height: 0;
  overflow: hidden;
  padding-right: 13px;
}
.menu {
  height: 63px;
  padding-top: 1px;
  border-top: 1px solid #39424a;
  border-bottom: 2px solid #4a5054;
  background: #666f74;
  font-size: 13px;
}
.menu-row {
  display: flex;
  height: 29px;
  padding-left: 31px;
}
.menu a {
  display: flex;
  align-items: center;
  height: 28px;
  padding: 2px 14px 0 13px;
  border-right: 1px solid #899197;
  color: #fff;
  text-decoration: none;
  white-space: nowrap;
}
.menu a:last-child {
  border: 0;
}
.menu .current {
  border-right: 0;
  background: linear-gradient(#c64004, #e88a1c);
  font-weight: 700;
}
.count {
  margin-left: 5px;
  padding: 0 6px;
  border-radius: 10px;
  background: #000;
  color: #d9141e;
  line-height: 26px;
}
.company {
  padding-left: 74px;
  color: #fff;
  line-height: 34px;
}
.box {
  min-width: 0;
  margin: 22px 12px 0 2px;
  padding: 22px 11px 19px;
  border: 1px solid #a0a0a0;
}
.box legend {
  margin-left: 8px;
  padding: 0 8px;
  border: 1px solid #a8a8a8;
  border-left: 3px solid #5c8d66;
  color: #465546;
  font-size: 13px;
  font-weight: 700;
  line-height: 30px;
}
.orders {
  margin-top: 15px;
  padding: 31px 9px 0;
}
.orders legend {
  margin-left: 10px;
}
.so-form {
  display: flex;
  align-items: center;
}
.so-form b {
  margin: 0 4px 0 2px;
  color: #d4141c;
}
.so-form input {
  width: 146px;
  height: 26px;
  border: 1px solid #999;
}
.so-form button {
  height: 26px;
  margin-left: 11px;
  padding: 0 9px;
  border: 0;
  border-radius: 3px;
  background: #069306;
  color: #fff;
}
.summary {
  display: flex;
  align-items: center;
  height: 18px;
  margin-bottom: 4px;
  padding: 0 5px;
  white-space: nowrap;
}
.hint {
  margin-right: auto;
  color: #c2142c;
}
.goto {
  margin: 0 4px 0 9px;
}
.pager {
  display: flex;
  gap: 4px;
  font-size: 11px;
}
.pager a {
  min-width: 20px;
  height: 17px;
  padding: 0 5px;
  border: 1px solid #9aafe5;
  color: #2e5a9e;
  line-height: 15px;
  text-align: center;
  text-decoration: none;
}
.pager .on {
  border-color: #2e6ab1;
  background: #2e6ab1;
  color: #fff;
  font-weight: 700;
}
.pager .prev {
  border-color: #ddd;
  color: #888;
  font-weight: 700;
}
.pager .next {
  font-weight: 700;
}
table {
  width: 100%;
  table-layout: fixed;
  border-collapse: collapse;
  font-size: 11px;
}
th {
  height: 43px;
  padding: 2px 0 0;
  background: #249a58;
  color: #fff;
  font-size: 12px;
  line-height: 18px;
}
.narrow {
  padding-left: 6px;
  padding-right: 6px;
}
td {
  height: 63px;
  padding: 3px 0 0;
  border: 1px solid #d0d0d0;
  line-height: 28px;
  text-align: center;
}
td svg {
  margin: 0 auto;
}
.icon {
  padding: 0;
}
.edit {
  padding-bottom: 28px;
}
tbody tr:nth-child(even) {
  background: #f4f4f4;
}
.filters td {
  height: 35px;
  padding: 0;
  line-height: 0;
}
.filters input,
.filters select {
  width: 72%;
  height: 25px;
  border: 1px solid #bbb;
  background: #fff;
  color: #123f44;
}
.filters .wide {
  width: 77%;
}
.processing {
  color: #4a8fdc;
}
.approved {
  color: #157a15;
}
footer {
  height: 27px;
  border-top: 1px solid #888;
  line-height: 28px;
  text-align: center;
}
footer a {
  color: #4682b4;
  text-decoration: none;
}
.scrollbar {
  display: flex;
  flex-direction: column;
  align-items: center;
  width: 14px;
  padding: 7px 0;
  background: #f0f0f0;
}
.thumb {
  width: 12px;
  height: 97px;
  margin: 6px 0 auto 2px;
  background: #c1c1c1;
}
.callout {
  position: absolute;
  left: 465px;
  top: 121px;
  padding: 5px 12px 6px 16px;
  border: 1px solid #777;
  background: #ffffce;
  box-shadow: 3px 3px 5px rgba(0, 0, 0, 0.55);
  color: #111;
  font-family: "Liberation Sans", Arial, sans-serif;
  font-size: 15px;
  line-height: 17px;
}
.callout p {
  margin: 0 0 17px;
}
.callout p:last-child {
  margin: 0;
}
.arrow {
  position: absolute;
  left: 79px;
  top: 146px;
}
.arrow-shape {
  filter: drop-shadow(3px 4px 2px rgba(0, 0, 0, 0.35));
}

/* Taskbars */
.taskbar {
  display: flex;
  height: 40px;
  background: #252423;
  color: #fff;
}
.inner {
  background: #1d1e1f;
}
.task {
  position: relative;
  display: grid;
  place-items: center;
  width: 49px;
  padding: 0;
  border: 0;
  background: none;
}
.start {
  width: 48px;
}
.task.active {
  background: #4d4d4d;
}
.run::after {
  content: "";
  position: absolute;
  left: 4px;
  right: 4px;
  bottom: 0;
  height: 2px;
  background: #76b0e4;
}
.inner .run::after {
  background: #b5b5b5;
}
.active.run::after {
  left: 0;
  right: 0;
}
.search {
  display: flex;
  align-items: center;
  width: 288px;
  padding-left: 12px;
  background: #f2f2f2;
  color: #222;
}
.search input {
  flex: 1;
  min-width: 0;
  margin-left: 11px;
  padding: 0;
  border: 0;
  background: none;
  font-size: 14px;
}
.search input::placeholder {
  color: #444;
}
.case {
  display: grid;
  place-items: center;
  width: 72px;
  height: 32px;
  margin-right: 4px;
  border-radius: 5px;
  background: #e2e2e2;
}
.first {
  margin-left: 2px;
}
.tray {
  display: flex;
  align-items: center;
  gap: 8px;
  margin-left: auto;
  padding-right: 22px;
}
.lang {
  margin: 0 1px;
}
.clock {
  display: flex;
  flex-direction: column;
  align-items: center;
  width: 58px;
  line-height: 18px;
}
.inner .bell {
  margin-left: 8px;
}
.outer .clock {
  margin-left: 4px;
}
.live {
  margin-right: 15px;
  color: #e8605f;
  font-size: 13px;
}
.bell {
  position: relative;
}
.badge {
  position: absolute;
  left: 7px;
  top: 6px;
  width: 18px;
  border: 1px solid #999;
  border-radius: 9px;
  background: #333;
  font-size: 11px;
  line-height: 16px;
  text-align: center;
}
.copilot {
  margin-left: 14px;
}
</style>
